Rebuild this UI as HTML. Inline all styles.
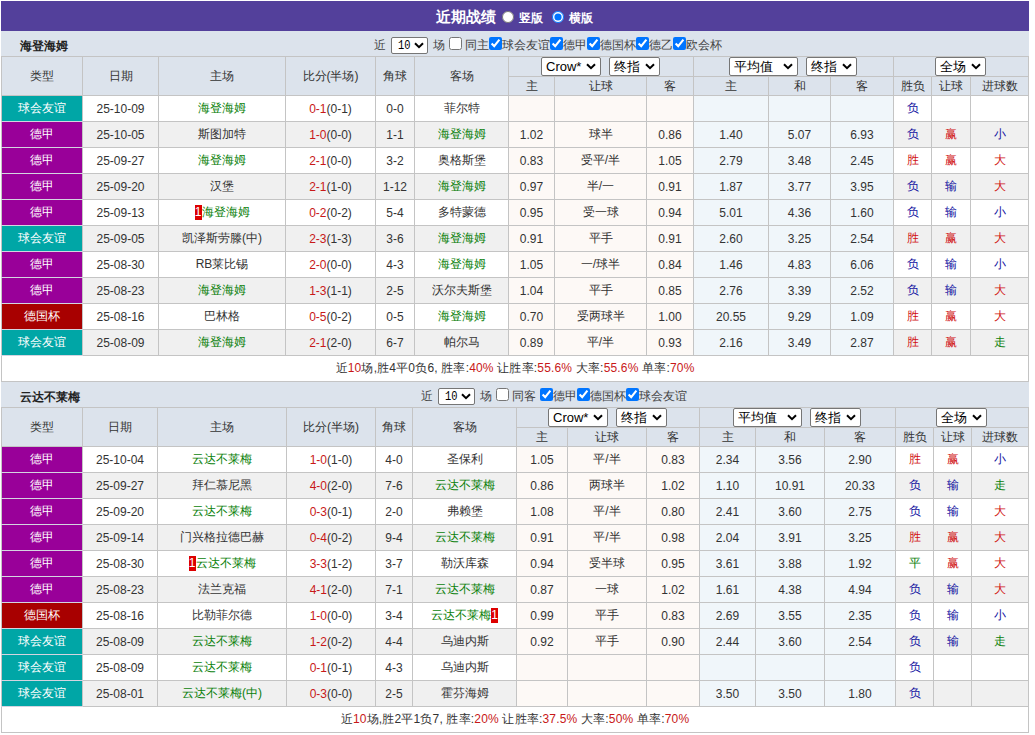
<!DOCTYPE html>
<html><head><meta charset="utf-8"><title>近期战绩</title>
<style>
html,body{margin:0;padding:0;background:#fff;}
body{position:relative;width:1035px;height:735px;overflow:hidden;font-family:"Liberation Sans",sans-serif;font-size:12px;color:#333;}
.title{position:absolute;left:1px;top:1px;width:1028px;height:30px;background:#53409b;color:#fff;line-height:30px;white-space:nowrap;}
.title .tt{position:absolute;left:435px;top:1px;font-size:15px;font-weight:bold;}
.title input{position:absolute;margin:0;top:10px;width:12px;height:12px;}
.title .rd1{left:501px;}
.title .rd2{left:551px;}
.title .rt{position:absolute;top:2px;font-size:12px;font-weight:bold;}
.title .rt1{left:518px;}.title .rt2{left:568px;}
.band{position:absolute;left:1px;width:1028px;height:25px;background:#dce3ec;}
.band .tn{position:absolute;left:19px;top:3px;line-height:25px;font-size:12px;font-weight:bold;color:#222;}
.band .ctl{position:absolute;top:6px;height:17px;white-space:nowrap;color:#444;font-size:0;}
.band .ctl > *{vertical-align:top;}
.band .tx{display:inline-block;font-size:12px;line-height:17px;}
.band .sel{margin-left:5px;margin-right:5px;}
.band input{margin:0;width:13px;height:13px;}
.band input.cb0{margin:0 3px 0 4px;}
.band .sp{display:inline-block;width:4px;}
.sel{display:inline-block;position:relative;box-sizing:border-box;background:#fff;border:1px solid #767676;border-radius:2px;text-align:left;}
.sel .st{position:absolute;left:4px;top:0;color:#000;}
.sel .chev{position:absolute;right:4px;}
.s10{width:37px;height:17px;}
.s10 .st{font-family:"Liberation Mono",monospace;font-size:13px;line-height:16px;left:6px;transform:scaleX(.8);transform-origin:0 0;}
.s10 .chev{top:4px;right:3px;}
th.selc{font-size:0;padding-right:1px !important;}
th.selc .sel{height:19px;vertical-align:top;margin:0;font-size:13px;}
th.selc .sel+.sel{margin-left:8px;}
th.selc .st{line-height:17px;}
th.selc .chev{top:5px;}
.s1{width:60px;}.s2{width:51px;}.s3{width:69px;}.s4{width:51px;}
table.t{position:absolute;left:1px;border-collapse:collapse;table-layout:fixed;width:1028px;}
table.t th,table.t td{border:1px solid #c4c4c4;padding:0;text-align:center;white-space:nowrap;overflow:hidden;font-weight:normal;}
table.t th{background:#dce3ec;color:#333;}
tr.h1 th{height:19px;}
tr.h2 th{height:18px;}
tr.d td{height:25px;background:#fff;color:#333;}
tr.d.alt td{background:#f0f0f0;}
tr.d td.od1{background:#fdf9f6;}
tr.d td.od2{background:#f0f6fa;}
tr.d td.ty{color:#fff;border-bottom-color:#d4d4e0;}
td.tf{background:#00a6a6 !important;}
td.tb{background:#990099 !important;}
td.tc{background:#a80000 !important;}
.gt{color:#0a7f0a;}
.sc{color:#c81818;}
.rc{background:#dd0000;color:#fff;font-weight:normal;display:inline-block;width:7px;line-height:15px;font-size:12px;vertical-align:0;}
.r{color:#d01010;}.b{color:#1010a0;}.gn{color:#0a800a;}
.rd{color:#c81818;}
tr.sum td{height:25px;background:#fff;letter-spacing:.18px;}

</style></head><body>
<div class="title"><b class="tt">近期战绩</b><input type="radio" name="v" class="rd1"><span class="rt rt1">竖版</span><input type="radio" name="v" checked class="rd2"><span class="rt rt2">横版</span></div>
<div class="band" style="top:31px"><b class="tn">海登海姆</b><div class="ctl" style="left:373px"><span class="tx">近</span><span class="sel s10"><span class="st">10</span><svg class="chev" width="10" height="7" viewBox="0 0 10 7"><path d="M1 1.2L5 5.2L9 1.2" fill="none" stroke="#000" stroke-width="2"/></svg></span><span class="tx ch">场</span><input type="checkbox" class="cb0"><span class="tx">同主</span><input type="checkbox" checked class="cb"><span class="tx">球会友谊</span><input type="checkbox" checked class="cb"><span class="tx">德甲</span><input type="checkbox" checked class="cb"><span class="tx">德国杯</span><input type="checkbox" checked class="cb"><span class="tx">德乙</span><input type="checkbox" checked class="cb"><span class="tx">欧会杯</span></div></div>
<table class="t" style="top:56px"><colgroup><col style="width:81px"><col style="width:76px"><col style="width:127px"><col style="width:90px"><col style="width:39px"><col style="width:94px"><col style="width:46px"><col style="width:92px"><col style="width:47px"><col style="width:75px"><col style="width:62px"><col style="width:63px"><col style="width:38px"><col style="width:39px"><col style="width:58px"></colgroup>
<tr class="h1"><th rowspan="2">类型</th><th rowspan="2">日期</th><th rowspan="2">主场</th><th rowspan="2">比分(半场)</th><th rowspan="2">角球</th><th rowspan="2">客场</th>
<th colspan="3" class="selc"><span class="sel s1"><span class="st">Crow*</span><svg class="chev" width="10" height="7" viewBox="0 0 10 7"><path d="M1 1.2L5 5.2L9 1.2" fill="none" stroke="#000" stroke-width="2"/></svg></span><span class="sel s2"><span class="st">终指</span><svg class="chev" width="10" height="7" viewBox="0 0 10 7"><path d="M1 1.2L5 5.2L9 1.2" fill="none" stroke="#000" stroke-width="2"/></svg></span></th>
<th colspan="3" class="selc"><span class="sel s3"><span class="st">平均值</span><svg class="chev" width="10" height="7" viewBox="0 0 10 7"><path d="M1 1.2L5 5.2L9 1.2" fill="none" stroke="#000" stroke-width="2"/></svg></span><span class="sel s2"><span class="st">终指</span><svg class="chev" width="10" height="7" viewBox="0 0 10 7"><path d="M1 1.2L5 5.2L9 1.2" fill="none" stroke="#000" stroke-width="2"/></svg></span></th>
<th colspan="3" class="selc"><span class="sel s4"><span class="st">全场</span><svg class="chev" width="10" height="7" viewBox="0 0 10 7"><path d="M1 1.2L5 5.2L9 1.2" fill="none" stroke="#000" stroke-width="2"/></svg></span></th></tr>
<tr class="h2"><th>主</th><th>让球</th><th>客</th><th>主</th><th>和</th><th>客</th><th>胜负</th><th>让球</th><th>进球数</th></tr>
<tr class="d "><td class="ty tf">球会友谊</td><td>25-10-09</td><td><span class="gt">海登海姆</span></td><td><span class="sc">0-1</span>(0-1)</td><td>0-0</td><td>菲尔特</td><td class="od1"></td><td class="od1"></td><td class="od1"></td><td class="od2"></td><td class="od2"></td><td class="od2"></td><td><span class="b">负</span></td><td></td><td></td></tr>
<tr class="d alt"><td class="ty tb">德甲</td><td>25-10-05</td><td>斯图加特</td><td><span class="sc">1-0</span>(0-0)</td><td>1-1</td><td><span class="gt">海登海姆</span></td><td class="od1">1.02</td><td class="od1">球半</td><td class="od1">0.86</td><td class="od2">1.40</td><td class="od2">5.07</td><td class="od2">6.93</td><td><span class="b">负</span></td><td><span class="r">赢</span></td><td><span class="b">小</span></td></tr>
<tr class="d "><td class="ty tb">德甲</td><td>25-09-27</td><td><span class="gt">海登海姆</span></td><td><span class="sc">2-1</span>(0-0)</td><td>3-2</td><td>奥格斯堡</td><td class="od1">0.83</td><td class="od1">受平/半</td><td class="od1">1.05</td><td class="od2">2.79</td><td class="od2">3.48</td><td class="od2">2.45</td><td><span class="r">胜</span></td><td><span class="r">赢</span></td><td><span class="r">大</span></td></tr>
<tr class="d alt"><td class="ty tb">德甲</td><td>25-09-20</td><td>汉堡</td><td><span class="sc">2-1</span>(1-0)</td><td>1-12</td><td><span class="gt">海登海姆</span></td><td class="od1">0.97</td><td class="od1">半/一</td><td class="od1">0.91</td><td class="od2">1.87</td><td class="od2">3.77</td><td class="od2">3.95</td><td><span class="b">负</span></td><td><span class="b">输</span></td><td><span class="r">大</span></td></tr>
<tr class="d "><td class="ty tb">德甲</td><td>25-09-13</td><td><span class="rc">1</span><span class="gt">海登海姆</span></td><td><span class="sc">0-2</span>(0-2)</td><td>5-4</td><td>多特蒙德</td><td class="od1">0.95</td><td class="od1">受一球</td><td class="od1">0.94</td><td class="od2">5.01</td><td class="od2">4.36</td><td class="od2">1.60</td><td><span class="b">负</span></td><td><span class="b">输</span></td><td><span class="b">小</span></td></tr>
<tr class="d alt"><td class="ty tf">球会友谊</td><td>25-09-05</td><td>凯泽斯劳滕(中)</td><td><span class="sc">2-3</span>(1-3)</td><td>3-6</td><td><span class="gt">海登海姆</span></td><td class="od1">0.91</td><td class="od1">平手</td><td class="od1">0.91</td><td class="od2">2.60</td><td class="od2">3.25</td><td class="od2">2.54</td><td><span class="r">胜</span></td><td><span class="r">赢</span></td><td><span class="r">大</span></td></tr>
<tr class="d "><td class="ty tb">德甲</td><td>25-08-30</td><td>RB莱比锡</td><td><span class="sc">2-0</span>(0-0)</td><td>4-3</td><td><span class="gt">海登海姆</span></td><td class="od1">1.05</td><td class="od1">一/球半</td><td class="od1">0.84</td><td class="od2">1.46</td><td class="od2">4.83</td><td class="od2">6.06</td><td><span class="b">负</span></td><td><span class="b">输</span></td><td><span class="b">小</span></td></tr>
<tr class="d alt"><td class="ty tb">德甲</td><td>25-08-23</td><td><span class="gt">海登海姆</span></td><td><span class="sc">1-3</span>(1-1)</td><td>2-5</td><td>沃尔夫斯堡</td><td class="od1">1.04</td><td class="od1">平手</td><td class="od1">0.85</td><td class="od2">2.76</td><td class="od2">3.39</td><td class="od2">2.52</td><td><span class="b">负</span></td><td><span class="b">输</span></td><td><span class="r">大</span></td></tr>
<tr class="d "><td class="ty tc">德国杯</td><td>25-08-16</td><td>巴林格</td><td><span class="sc">0-5</span>(0-2)</td><td>0-5</td><td><span class="gt">海登海姆</span></td><td class="od1">0.70</td><td class="od1">受两球半</td><td class="od1">1.00</td><td class="od2">20.55</td><td class="od2">9.29</td><td class="od2">1.09</td><td><span class="r">胜</span></td><td><span class="r">赢</span></td><td><span class="r">大</span></td></tr>
<tr class="d alt"><td class="ty tf">球会友谊</td><td>25-08-09</td><td><span class="gt">海登海姆</span></td><td><span class="sc">2-1</span>(2-0)</td><td>6-7</td><td>帕尔马</td><td class="od1">0.89</td><td class="od1">平/半</td><td class="od1">0.93</td><td class="od2">2.16</td><td class="od2">3.49</td><td class="od2">2.87</td><td><span class="r">胜</span></td><td><span class="r">赢</span></td><td><span class="gn">走</span></td></tr>
<tr class="sum"><td colspan="15">近<span class="rd">10</span>场,胜4平0负6, 胜率:<span class="rd">40%</span> 让胜率:<span class="rd">55.6%</span> 大率:<span class="rd">55.6%</span> 单率:<span class="rd">70%</span></td></tr>
</table>
<div class="band" style="top:382px"><b class="tn">云达不莱梅</b><div class="ctl" style="left:420px"><span class="tx">近</span><span class="sel s10"><span class="st">10</span><svg class="chev" width="10" height="7" viewBox="0 0 10 7"><path d="M1 1.2L5 5.2L9 1.2" fill="none" stroke="#000" stroke-width="2"/></svg></span><span class="tx ch">场</span><input type="checkbox" class="cb0"><span class="tx">同客</span><span class="sp"></span><input type="checkbox" checked class="cb"><span class="tx">德甲</span><input type="checkbox" checked class="cb"><span class="tx">德国杯</span><input type="checkbox" checked class="cb"><span class="tx">球会友谊</span></div></div>
<table class="t" style="top:407px"><colgroup><col style="width:81px"><col style="width:75px"><col style="width:129px"><col style="width:89px"><col style="width:37px"><col style="width:104px"><col style="width:51px"><col style="width:79px"><col style="width:53px"><col style="width:56px"><col style="width:69px"><col style="width:71px"><col style="width:38px"><col style="width:38px"><col style="width:57px"></colgroup>
<tr class="h1"><th rowspan="2">类型</th><th rowspan="2">日期</th><th rowspan="2">主场</th><th rowspan="2">比分(半场)</th><th rowspan="2">角球</th><th rowspan="2">客场</th>
<th colspan="3" class="selc"><span class="sel s1"><span class="st">Crow*</span><svg class="chev" width="10" height="7" viewBox="0 0 10 7"><path d="M1 1.2L5 5.2L9 1.2" fill="none" stroke="#000" stroke-width="2"/></svg></span><span class="sel s2"><span class="st">终指</span><svg class="chev" width="10" height="7" viewBox="0 0 10 7"><path d="M1 1.2L5 5.2L9 1.2" fill="none" stroke="#000" stroke-width="2"/></svg></span></th>
<th colspan="3" class="selc"><span class="sel s3"><span class="st">平均值</span><svg class="chev" width="10" height="7" viewBox="0 0 10 7"><path d="M1 1.2L5 5.2L9 1.2" fill="none" stroke="#000" stroke-width="2"/></svg></span><span class="sel s2"><span class="st">终指</span><svg class="chev" width="10" height="7" viewBox="0 0 10 7"><path d="M1 1.2L5 5.2L9 1.2" fill="none" stroke="#000" stroke-width="2"/></svg></span></th>
<th colspan="3" class="selc"><span class="sel s4"><span class="st">全场</span><svg class="chev" width="10" height="7" viewBox="0 0 10 7"><path d="M1 1.2L5 5.2L9 1.2" fill="none" stroke="#000" stroke-width="2"/></svg></span></th></tr>
<tr class="h2"><th>主</th><th>让球</th><th>客</th><th>主</th><th>和</th><th>客</th><th>胜负</th><th>让球</th><th>进球数</th></tr>
<tr class="d "><td class="ty tb">德甲</td><td>25-10-04</td><td><span class="gt">云达不莱梅</span></td><td><span class="sc">1-0</span>(1-0)</td><td>4-0</td><td>圣保利</td><td class="od1">1.05</td><td class="od1">平/半</td><td class="od1">0.83</td><td class="od2">2.34</td><td class="od2">3.56</td><td class="od2">2.90</td><td><span class="r">胜</span></td><td><span class="r">赢</span></td><td><span class="b">小</span></td></tr>
<tr class="d alt"><td class="ty tb">德甲</td><td>25-09-27</td><td>拜仁慕尼黑</td><td><span class="sc">4-0</span>(2-0)</td><td>7-6</td><td><span class="gt">云达不莱梅</span></td><td class="od1">0.86</td><td class="od1">两球半</td><td class="od1">1.02</td><td class="od2">1.10</td><td class="od2">10.91</td><td class="od2">20.33</td><td><span class="b">负</span></td><td><span class="b">输</span></td><td><span class="gn">走</span></td></tr>
<tr class="d "><td class="ty tb">德甲</td><td>25-09-20</td><td><span class="gt">云达不莱梅</span></td><td><span class="sc">0-3</span>(0-1)</td><td>2-0</td><td>弗赖堡</td><td class="od1">1.08</td><td class="od1">平/半</td><td class="od1">0.80</td><td class="od2">2.41</td><td class="od2">3.60</td><td class="od2">2.75</td><td><span class="b">负</span></td><td><span class="b">输</span></td><td><span class="r">大</span></td></tr>
<tr class="d alt"><td class="ty tb">德甲</td><td>25-09-14</td><td>门兴格拉德巴赫</td><td><span class="sc">0-4</span>(0-2)</td><td>9-4</td><td><span class="gt">云达不莱梅</span></td><td class="od1">0.91</td><td class="od1">平/半</td><td class="od1">0.98</td><td class="od2">2.04</td><td class="od2">3.91</td><td class="od2">3.25</td><td><span class="r">胜</span></td><td><span class="r">赢</span></td><td><span class="r">大</span></td></tr>
<tr class="d "><td class="ty tb">德甲</td><td>25-08-30</td><td><span class="rc">1</span><span class="gt">云达不莱梅</span></td><td><span class="sc">3-3</span>(1-2)</td><td>3-7</td><td>勒沃库森</td><td class="od1">0.94</td><td class="od1">受半球</td><td class="od1">0.95</td><td class="od2">3.61</td><td class="od2">3.88</td><td class="od2">1.92</td><td><span class="gn">平</span></td><td><span class="r">赢</span></td><td><span class="r">大</span></td></tr>
<tr class="d alt"><td class="ty tb">德甲</td><td>25-08-23</td><td>法兰克福</td><td><span class="sc">4-1</span>(2-0)</td><td>7-1</td><td><span class="gt">云达不莱梅</span></td><td class="od1">0.87</td><td class="od1">一球</td><td class="od1">1.02</td><td class="od2">1.61</td><td class="od2">4.38</td><td class="od2">4.94</td><td><span class="b">负</span></td><td><span class="b">输</span></td><td><span class="r">大</span></td></tr>
<tr class="d "><td class="ty tc">德国杯</td><td>25-08-16</td><td>比勒菲尔德</td><td><span class="sc">1-0</span>(0-0)</td><td>3-4</td><td><span class="gt">云达不莱梅</span><span class="rc">1</span></td><td class="od1">0.99</td><td class="od1">平手</td><td class="od1">0.83</td><td class="od2">2.69</td><td class="od2">3.55</td><td class="od2">2.35</td><td><span class="b">负</span></td><td><span class="b">输</span></td><td><span class="b">小</span></td></tr>
<tr class="d alt"><td class="ty tf">球会友谊</td><td>25-08-09</td><td><span class="gt">云达不莱梅</span></td><td><span class="sc">1-2</span>(0-2)</td><td>4-4</td><td>乌迪内斯</td><td class="od1">0.92</td><td class="od1">平手</td><td class="od1">0.90</td><td class="od2">2.44</td><td class="od2">3.60</td><td class="od2">2.54</td><td><span class="b">负</span></td><td><span class="b">输</span></td><td><span class="gn">走</span></td></tr>
<tr class="d "><td class="ty tf">球会友谊</td><td>25-08-09</td><td><span class="gt">云达不莱梅</span></td><td><span class="sc">0-1</span>(0-1)</td><td>4-3</td><td>乌迪内斯</td><td class="od1"></td><td class="od1"></td><td class="od1"></td><td class="od2"></td><td class="od2"></td><td class="od2"></td><td><span class="b">负</span></td><td></td><td></td></tr>
<tr class="d alt"><td class="ty tf">球会友谊</td><td>25-08-01</td><td><span class="gt">云达不莱梅(中)</span></td><td><span class="sc">0-3</span>(0-0)</td><td>2-5</td><td>霍芬海姆</td><td class="od1"></td><td class="od1"></td><td class="od1"></td><td class="od2">3.50</td><td class="od2">3.50</td><td class="od2">1.80</td><td><span class="b">负</span></td><td></td><td></td></tr>
<tr class="sum"><td colspan="15">近<span class="rd">10</span>场,胜2平1负7, 胜率:<span class="rd">20%</span> 让胜率:<span class="rd">37.5%</span> 大率:<span class="rd">50%</span> 单率:<span class="rd">70%</span></td></tr>
</table>
</body></html>
